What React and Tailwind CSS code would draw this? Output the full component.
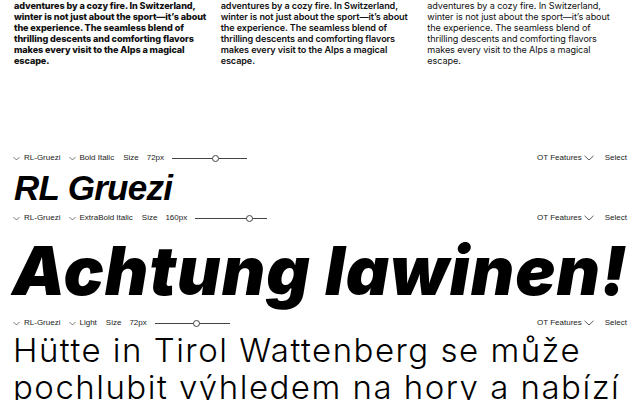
import React from "react";

const lines = [
  "adventures by a cozy fire. In Switzerland,",
  "winter is not just about the sport\u2014it\u2019s about",
  "the experience. The seamless blend of",
  "thrilling descents and comforting flavors",
  "makes every visit to the Alps a magical",
  "escape.",
];

function Para({ weight }) {
  return (
    <p className={`text-[9.1px] leading-[11px] tracking-[-0.01em] text-[#111] ${weight}`} style={{ fontFamily: "Inter, 'Liberation Sans', sans-serif" }}>
      {lines.map((l, i) => (
        <span key={i} className="block whitespace-nowrap">{l}</span>
      ))}
    </p>
  );
}

function Chev() {
  return (
    <svg width="7" height="5" viewBox="0 0 7 5" className="shrink-0">
      <path d="M0.5 1 L3.5 4 L6.5 1" fill="none" stroke="#555" strokeWidth="0.8" />
    </svg>
  );
}

function Slider({ width, pos }) {
  return (
    <div className="relative h-[9px] flex items-center" style={{ width }}>
      <div className="h-px w-full bg-[#444]" />
      <div
        className="absolute top-[1px] w-[7px] h-[7px] rounded-full bg-white border border-[#444]"
        style={{ left: pos - 3.5 }}
      />
    </div>
  );
}

function Toolbar({ style, size, slider, pos }) {
  return (
    <div className="flex items-center justify-between h-[12px] pl-[13px] pr-[13px] text-[8px] text-[#222]">
      <div className="flex items-center">
        <Chev />
        <span className="ml-[4px]">RL-Gruezi</span>
        <span className="ml-[9px]"><Chev /></span>
        <span className="ml-[3px]">{style}</span>
        <span className="ml-[9px]">Size</span>
        <span className="ml-[8px]">{size}</span>
        <span className="ml-[8px]"><Slider width={slider} pos={pos} /></span>
      </div>
      <div className="flex items-center">
        <span>OT Features</span>
        <svg width="10" height="6" viewBox="0 0 10 6" className="ml-[2px]">
          <path d="M0.5 0.8 L5 5 L9.5 0.8" fill="none" stroke="#333" strokeWidth="0.8" />
        </svg>
        <span className="ml-[11px]">Select</span>
      </div>
    </div>
  );
}

export default function App() {
  return (
    <div className="w-[640px] h-[400px] overflow-hidden bg-white text-black" style={{ fontFamily: "'Liberation Sans', Arial, sans-serif" }}>
      <div className="h-[152px] grid grid-cols-3 gap-x-[8px] pl-[14px] pr-[14px] pt-0">
        <Para weight="font-extrabold" />
        <Para weight="font-semibold" />
        <Para weight="font-normal" />
      </div>
      <Toolbar style="Bold Italic" size="72px" slider={75} pos={43} />
      <div className="h-[48px] pl-[14px] text-[35px] leading-[48px] font-bold italic tracking-[-0.02em] whitespace-nowrap">
        RL Gruezi
      </div>
      <Toolbar style="ExtraBold Italic" size="160px" slider={72} pos={54} />
      <div className="h-[93px] pl-[12px] text-[67px] leading-[93px] font-black italic tracking-[0.015em] whitespace-nowrap" style={{ fontFamily: "Inter, 'Liberation Sans', sans-serif" }}>
        Achtung lawinen!
      </div>
      <Toolbar style="Light" size="72px" slider={75} pos={42} />
      <div className="pl-[13px] pt-[3px] text-[33px] leading-[37px] font-light tracking-[0.045em] whitespace-nowrap" style={{ fontFamily: "Inter, 'Liberation Sans', sans-serif" }}>
        <div>Hütte in Tirol Wattenberg se může</div>
        <div>pochlubit výhledem na hory a nabízí</div>
      </div>
    </div>
  );
}
